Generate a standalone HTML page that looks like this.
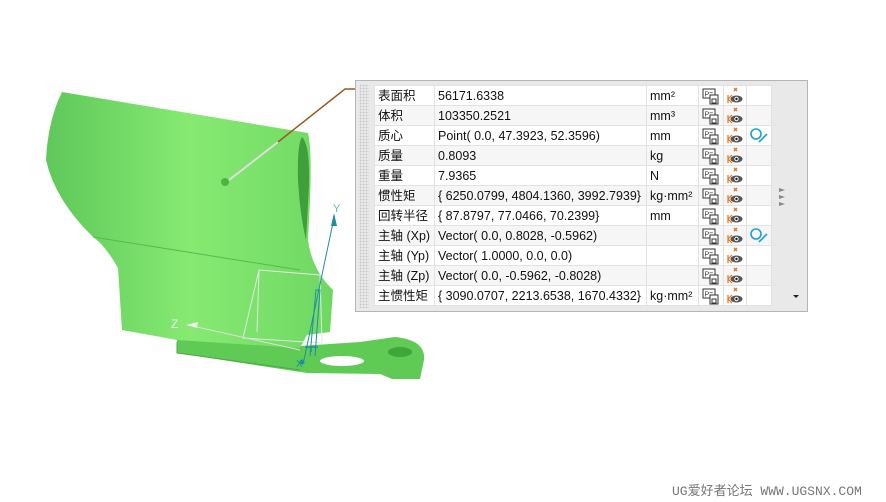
<!DOCTYPE html>
<html><head><meta charset="utf-8"><style>
*{margin:0;padding:0;box-sizing:border-box}
body{width:886px;height:502px;background:#fff;position:relative;overflow:hidden;font-family:"Liberation Sans","Noto Sans CJK SC",sans-serif}
#panel{position:absolute;left:355px;top:80px;width:453px;height:232px;background:#e9e9e9;border:1px solid #b5b5b5}
#grip{position:absolute;left:3px;top:3px;width:10px;height:224px;background-image:radial-gradient(circle,#c4c4c4 0.7px,transparent 1px);background-size:3px 3px}
table{position:absolute;left:18px;top:4px;border-collapse:collapse;background:#fff;font-size:12.5px;color:#111}
td{height:20px;border:1px solid #e2e2e2;padding:0 0 0 3px;white-space:nowrap;vertical-align:middle;line-height:18px}
tr:nth-child(even) td{background:#f6f6f6}
td.i{padding:0;text-align:center}
svg.ic{display:block;margin:0 auto}
.arr{position:absolute;left:423px;width:0;height:0;border-top:2px solid transparent;border-bottom:2px solid transparent;border-left:6px solid #888}
#wm{position:absolute;left:672px;top:480px;font-family:"Liberation Mono","Noto Sans CJK SC",monospace;font-size:13px;color:#777}
</style></head><body>
<svg width="886" height="502" style="position:absolute;left:0;top:0">
<defs>
<linearGradient id="g1" x1="0" y1="0" x2="1" y2="0"><stop offset="0" stop-color="#5fc85a"/><stop offset=".5" stop-color="#86ea72"/><stop offset="1" stop-color="#6fd862"/></linearGradient>
</defs>
<path d="M177 338 L300 346 L360 342 L395 337 Q426 340 424 360 L420 379 L392 379 L380 374 L307 373 L177 353 Z" fill="#5fcb55"/>
<ellipse cx="400" cy="352" rx="12" ry="5" fill="#3fa63a"/>
<ellipse cx="342" cy="361" rx="22" ry="5" fill="#fff"/>
<path d="M62 92 L308 133 Q312 150 310 200 L308 240 Q312 270 333 290 L330 332 L307 335 L300 348 L177 340 L122 330 L118 268 Q105 245 93 237 Q55 200 46 160 Q48 120 62 92 Z" fill="url(#g1)"/>
<path d="M302 137 Q310 145 309 185 L306 240 Q300 215 298 180 Q297 145 302 137 Z" fill="#3f9f3b"/>
<path d="M93 237 L300 270" stroke="#58b850" stroke-width="1" fill="none"/>
<path d="M177 342 L177 353 L300 370" stroke="#4aa844" fill="none"/>
<path d="M355 89 L345 89 L278 142" stroke="#9a5a22" stroke-width="1.5" fill="none"/>
<path d="M278 142 L229 180" stroke="#ddd" stroke-width="2" fill="none"/>
<circle cx="225" cy="182" r="4" fill="#4bb544"/>
<path d="M259 270 L320 275 L322 343 L243 338 Z M259 270 L257 332" stroke="#e6e6e6" stroke-width="1" fill="none"/>
<path d="M304 360 L334 218" stroke="#1f8fa0" stroke-width="1"/>
<path d="M310 356 L316 290 L320 290 L315 356" stroke="#1f8fa0" stroke-width="1" fill="none"/>
<path d="M331 226 L334 213 L337 226 Z" fill="#1f8fa0"/>
<text x="333" y="212" font-size="11" fill="#5ab4c4" font-family="Liberation Sans">Y</text>
<path d="M300 350 L188 325" stroke="#ddd" stroke-width="1"/>
<path d="M186 325 L198 322 L197 328 Z" fill="#eee"/>
<text x="171" y="328" font-size="12" fill="#eee" font-family="Liberation Sans">Z</text>
<text x="296" y="367" font-size="10" fill="#1f8fa0" font-family="Liberation Sans">X</text>
<circle cx="302" cy="362" r="2.5" fill="#1f8fa0"/>
<path d="M305 347 L318 347 M311 347 L311 352" stroke="#1f8fa0" stroke-width="1.5"/>
</svg>
<svg width="0" height="0" style="position:absolute"><defs>
<symbol id="sv" viewBox="0 0 20 18"><rect x="2" y="2" width="12" height="9" fill="#fff" stroke="#333"/><text x="3.5" y="9.5" font-size="7" font-family="Liberation Sans" fill="#333">P=</text><rect x="9" y="8" width="8" height="9" fill="#fff" stroke="#333"/><rect x="11" y="12" width="4" height="4" fill="none" stroke="#333"/></symbol>
<symbol id="ey" viewBox="0 0 20 18"><path d="M9 1 L12 4 M12 1 L9 4" stroke="#e8751a" stroke-width="1.4"/><path d="M3 8 L3 16 M3 12 L7 8 M3 12 L7 16" stroke="#e8751a" stroke-width="1.2" fill="none"/><ellipse cx="11.5" cy="12" rx="6" ry="3.5" fill="#555"/><circle cx="11.5" cy="12" r="2.2" fill="#fff"/><circle cx="11.5" cy="12" r="1.2" fill="#222"/></symbol>
<symbol id="mg" viewBox="0 0 20 18"><circle cx="7" cy="7" r="5" fill="none" stroke="#1aa0d8" stroke-width="1.6"/><path d="M10 15 L18 7" stroke="#1aa0d8" stroke-width="1.6"/></symbol>
</defs></svg>
<div id="panel"><div id="grip"></div>
<table>
<colgroup><col style="width:60px"><col style="width:212px"><col style="width:52px"><col style="width:25px"><col style="width:23px"><col style="width:25px"></colgroup>
<tr><td>表面积</td><td>56171.6338</td><td>mm²</td><td class="i"><svg class="ic" width="20" height="18"><use href="#sv"/></svg></td><td class="i"><svg class="ic" width="20" height="18"><use href="#ey"/></svg></td><td></td></tr>
<tr><td>体积</td><td>103350.2521</td><td>mm³</td><td class="i"><svg class="ic" width="20" height="18"><use href="#sv"/></svg></td><td class="i"><svg class="ic" width="20" height="18"><use href="#ey"/></svg></td><td></td></tr>
<tr><td>质心</td><td>Point( 0.0, 47.3923, 52.3596)</td><td>mm</td><td class="i"><svg class="ic" width="20" height="18"><use href="#sv"/></svg></td><td class="i"><svg class="ic" width="20" height="18"><use href="#ey"/></svg></td><td class="i"><svg class="ic" width="20" height="18"><use href="#mg"/></svg></td></tr>
<tr><td>质量</td><td>0.8093</td><td>kg</td><td class="i"><svg class="ic" width="20" height="18"><use href="#sv"/></svg></td><td class="i"><svg class="ic" width="20" height="18"><use href="#ey"/></svg></td><td></td></tr>
<tr><td>重量</td><td>7.9365</td><td>N</td><td class="i"><svg class="ic" width="20" height="18"><use href="#sv"/></svg></td><td class="i"><svg class="ic" width="20" height="18"><use href="#ey"/></svg></td><td></td></tr>
<tr><td>惯性矩</td><td>{ 6250.0799, 4804.1360, 3992.7939}</td><td>kg·mm²</td><td class="i"><svg class="ic" width="20" height="18"><use href="#sv"/></svg></td><td class="i"><svg class="ic" width="20" height="18"><use href="#ey"/></svg></td><td></td></tr>
<tr><td>回转半径</td><td>{ 87.8797, 77.0466, 70.2399}</td><td>mm</td><td class="i"><svg class="ic" width="20" height="18"><use href="#sv"/></svg></td><td class="i"><svg class="ic" width="20" height="18"><use href="#ey"/></svg></td><td></td></tr>
<tr><td>主轴 (Xp)</td><td>Vector( 0.0, 0.8028, -0.5962)</td><td></td><td class="i"><svg class="ic" width="20" height="18"><use href="#sv"/></svg></td><td class="i"><svg class="ic" width="20" height="18"><use href="#ey"/></svg></td><td class="i"><svg class="ic" width="20" height="18"><use href="#mg"/></svg></td></tr>
<tr><td>主轴 (Yp)</td><td>Vector( 1.0000, 0.0, 0.0)</td><td></td><td class="i"><svg class="ic" width="20" height="18"><use href="#sv"/></svg></td><td class="i"><svg class="ic" width="20" height="18"><use href="#ey"/></svg></td><td></td></tr>
<tr><td>主轴 (Zp)</td><td>Vector( 0.0, -0.5962, -0.8028)</td><td></td><td class="i"><svg class="ic" width="20" height="18"><use href="#sv"/></svg></td><td class="i"><svg class="ic" width="20" height="18"><use href="#ey"/></svg></td><td></td></tr>
<tr><td>主惯性矩</td><td>{ 3090.0707, 2213.6538, 1670.4332}</td><td>kg·mm²</td><td class="i"><svg class="ic" width="20" height="18"><use href="#sv"/></svg></td><td class="i"><svg class="ic" width="20" height="18"><use href="#ey"/></svg></td><td></td></tr>
</table>
<div class="arr" style="top:107px"></div><div class="arr" style="top:114px"></div><div class="arr" style="top:121px"></div>
<div style="position:absolute;left:437px;top:214px;border-left:3px solid transparent;border-right:3px solid transparent;border-top:3px solid #222"></div>
</div>
<div id="wm">UG爱好者论坛 WWW.UGSNX.COM</div>
</body></html>
